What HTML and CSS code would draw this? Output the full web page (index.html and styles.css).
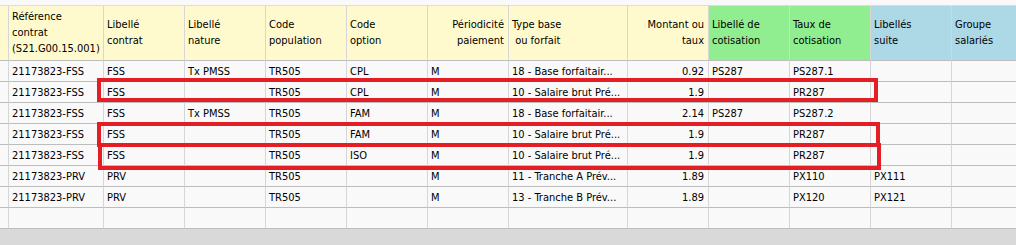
FILE: index.html
```html
<!DOCTYPE html>
<html lang="fr">
<head>
<meta charset="utf-8">
<link rel="stylesheet" href="styles.css">
</head>
<body>
<div class="page">
  <div class="grid">
    <div class="h y"></div>
    <div class="h y">Référence<br>contrat<br>(S21.G00.15.001)</div>
    <div class="h y">Libellé<br>contrat</div>
    <div class="h y">Libellé<br>nature</div>
    <div class="h y">Code<br>population</div>
    <div class="h y">Code<br>option</div>
    <div class="h y r">Périodicité<br>paiement</div>
    <div class="h y">Type base<br>&nbsp;ou forfait</div>
    <div class="h y r">Montant ou<br>taux</div>
    <div class="h g">Libellé de<br>cotisation</div>
    <div class="h g">Taux de<br>cotisation</div>
    <div class="h b">Libellés<br>suite</div>
    <div class="h b last">Groupe<br>salariés</div>

    <div class="c"></div><div class="c">21173823-FSS</div><div class="c">FSS</div><div class="c">Tx PMSS</div><div class="c">TR505</div><div class="c">CPL</div><div class="c">M</div><div class="c">18 - Base forfaitair...</div><div class="c r">0.92</div><div class="c">PS287</div><div class="c">PS287.1</div><div class="c"></div><div class="c last"></div>

    <div class="c"></div><div class="c">21173823-FSS</div><div class="c">FSS</div><div class="c"></div><div class="c">TR505</div><div class="c">CPL</div><div class="c">M</div><div class="c">10 - Salaire brut Pré...</div><div class="c r">1.9</div><div class="c"></div><div class="c">PR287</div><div class="c"></div><div class="c last"></div>

    <div class="c"></div><div class="c">21173823-FSS</div><div class="c">FSS</div><div class="c">Tx PMSS</div><div class="c">TR505</div><div class="c">FAM</div><div class="c">M</div><div class="c">18 - Base forfaitair...</div><div class="c r">2.14</div><div class="c">PS287</div><div class="c">PS287.2</div><div class="c"></div><div class="c last"></div>

    <div class="c"></div><div class="c">21173823-FSS</div><div class="c">FSS</div><div class="c"></div><div class="c">TR505</div><div class="c">FAM</div><div class="c">M</div><div class="c">10 - Salaire brut Pré...</div><div class="c r">1.9</div><div class="c"></div><div class="c">PR287</div><div class="c"></div><div class="c last"></div>

    <div class="c"></div><div class="c">21173823-FSS</div><div class="c">FSS</div><div class="c"></div><div class="c">TR505</div><div class="c">ISO</div><div class="c">M</div><div class="c">10 - Salaire brut Pré...</div><div class="c r">1.9</div><div class="c"></div><div class="c">PR287</div><div class="c"></div><div class="c last"></div>

    <div class="c"></div><div class="c">21173823-PRV</div><div class="c">PRV</div><div class="c"></div><div class="c">TR505</div><div class="c"></div><div class="c">M</div><div class="c">11 - Tranche A Prév...</div><div class="c r">1.89</div><div class="c"></div><div class="c">PX110</div><div class="c">PX111</div><div class="c last"></div>

    <div class="c"></div><div class="c">21173823-PRV</div><div class="c">PRV</div><div class="c"></div><div class="c">TR505</div><div class="c"></div><div class="c">M</div><div class="c">13 - Tranche B Prév...</div><div class="c r">1.89</div><div class="c"></div><div class="c">PX120</div><div class="c">PX121</div><div class="c last"></div>

    <div class="c"></div><div class="c"></div><div class="c"></div><div class="c"></div><div class="c"></div><div class="c"></div><div class="c"></div><div class="c"></div><div class="c"></div><div class="c"></div><div class="c"></div><div class="c"></div><div class="c last"></div>
  </div>
  <div class="footer"></div>

  <div class="mark m1"></div>
  <div class="mark m2"></div>
  <div class="mark m3"></div>
</div>
</body>
</html>
```

FILE: styles.css
```css
html, body {
  margin: 0;
  padding: 0;
  background: #f9f9f9;
}

.page {
  position: relative;
  width: 1016px;
  height: 245px;
  overflow: hidden;
  font-family: "DejaVu Sans Condensed", "DejaVu Sans", sans-serif;
  font-size: 11px;
  color: #000;
  padding-top: 5px;
  box-sizing: border-box;
}

.grid {
  display: grid;
  grid-template-columns: 9px 95px 81px 81px 81px 81px 81px 119px 81px 81px 81px 81px 1fr;
  grid-template-rows: 55px repeat(8, 21px);
  border-top: 1px solid #dcdcdc;
  background: #f9f9f9;
}

.h, .c {
  box-sizing: border-box;
  border-right: 1px solid #d6d6d6;
  border-bottom: 1px solid #bdbdbd;
  display: flex;
  align-items: center;
  white-space: nowrap;
  overflow: hidden;
  padding: 0 3px 0 3px;
}

.h {
  line-height: 16px;
  color: #000;
}

.c {
  line-height: 14px;
  padding-top: 1px;
}

.last {
  border-right: none;
}

.y { background: #fffacd; }
.g { background: #90ee90; }
.b { background: #add8e6; }

.r {
  justify-content: flex-end;
  text-align: right;
  padding-right: 4px;
}

.footer {
  height: 16px;
  background: #d9d9d9;
}

.mark {
  position: absolute;
  border: 4px solid #e41e25;
  box-sizing: border-box;
}

.m1 { left: 97px; top: 78px; width: 781px; height: 24px; }
.m2 { left: 97px; top: 122px; width: 783px; height: 25px; }
.m3 { left: 98px; top: 143px; width: 783px; height: 27px; }
```
